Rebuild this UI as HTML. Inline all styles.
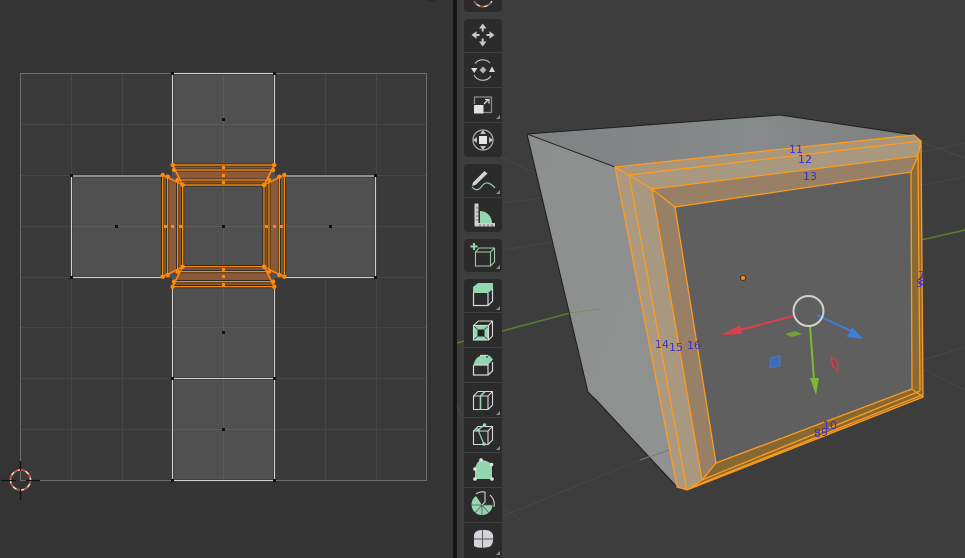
<!DOCTYPE html>
<html><head><meta charset="utf-8"><style>
html,body{margin:0;padding:0;background:#3d3d3d;width:965px;height:558px;overflow:hidden}
svg{display:block}
text{font-family:"DejaVu Sans","Liberation Sans",sans-serif;font-size:11px;fill:#3a30cc}
</style></head><body>
<svg width="965" height="558" viewBox="0 0 965 558" xmlns="http://www.w3.org/2000/svg">
<!-- backgrounds -->
<rect width="453" height="558" fill="#343434"/>
<rect x="457" width="508" height="558" fill="#3d3d3d"/>
<rect x="453" width="4" height="558" fill="#151515"/>
<circle cx="431" cy="-5" r="7" fill="#2a2a2a"/>

<!-- UV grid -->
<rect x="20.5" y="73.5" width="406" height="407" fill="#3a3a3a"/>
<g stroke="#464646" stroke-width="1" fill="none">
<path d="M71.5 73V480M122.5 73V480M172.5 73V480M223.5 73V480M274.5 73V480M325.5 73V480M376.5 73V480"/>
<path d="M20 124.5H426M20 175.5H426M20 226.5H426M20 277.5H426M20 327.5H426M20 378.5H426M20 429.5H426"/>
</g>
<rect x="20.5" y="73.5" width="406" height="407" fill="none" stroke="#6e6e6e"/>

<!-- UV faces -->
<g fill="#505050">
<rect x="172" y="74" width="103" height="102"/>
<rect x="71" y="176" width="101" height="102"/>
<rect x="172" y="176" width="103" height="102"/>
<rect x="275" y="176" width="101" height="102"/>
<rect x="172" y="278" width="103" height="101"/>
<rect x="172" y="379" width="103" height="101"/>
</g>
<g stroke="#5c5c5c" fill="none">
<path d="M223.5 74V480M172 124.5H275M71 226.5H376M172 327.5H275M172 429.5H275"/>
</g>
<g fill="none" stroke="#222" stroke-width="2.6">
<path d="M172.5 165V73.5H274.5V165M172.5 287V480.5H274.5V287M163 176H71.5V277.5H163M284 176H375.5V277.5H284M172.5 378.5H274.5"/>
</g>
<g fill="none" stroke="#d0d0d0" stroke-width="1.3">
<path d="M172.5 165V73.5H274.5V165M172.5 287V480.5H274.5V287M163 176H71.5V277.5H163M284 176H375.5V277.5H284M172.5 378.5H274.5"/>
</g>
<g fill="#111">
<rect x="171" y="72" width="3" height="3"/><rect x="273" y="72" width="3" height="3"/>
<rect x="70" y="174" width="3" height="3"/><rect x="374" y="174" width="3" height="3"/>
<rect x="70" y="276" width="3" height="3"/><rect x="374" y="276" width="3" height="3"/>
<rect x="171" y="377" width="3" height="3"/><rect x="273" y="377" width="3" height="3"/>
<rect x="171" y="479" width="3" height="3"/><rect x="273" y="479" width="3" height="3"/>
<rect x="222" y="118" width="3" height="3"/><rect x="115" y="225" width="3" height="3"/>
<rect x="222" y="225" width="3" height="3"/><rect x="329" y="225" width="3" height="3"/>
<rect x="222" y="331" width="3" height="3"/><rect x="222" y="428" width="3" height="3"/>
</g>

<!-- UV selected island -->
<g stroke="none">
<path d="M172.7 165H274.3L273 170H174Z" fill="#7a5c38"/>
<path d="M174 170H273L269 180H177.7Z" fill="#8c5a3a"/>
<path d="M177.7 180H269L264 185H182.7Z" fill="#7a5c38"/>
<path d="M172.7 286.7H274.3L273 281.7H174Z" fill="#7a5c38"/>
<path d="M174 281.7H273L269 271.7H177.7Z" fill="#8c5a3a"/>
<path d="M177.7 271.7H269L264 266.7H182.7Z" fill="#7a5c38"/>
<path d="M162.7 175L167.7 176.7V275L162.7 276.7Z" fill="#7a5c38"/>
<path d="M167.7 176.7L177.7 180V271.7L167.7 275Z" fill="#8c5a3a"/>
<path d="M177.7 180L182.7 185V266.7L177.7 271.7Z" fill="#7a5c38"/>
<path d="M284.3 175L279.3 176.7V275L284.3 276.7Z" fill="#7a5c38"/>
<path d="M279.3 176.7L269 180V271.7L279.3 275Z" fill="#8c5a3a"/>
<path d="M269 180L264 185V266.7L269 271.7Z" fill="#7a5c38"/>
</g>
<g fill="none" stroke="#1a1a1a" stroke-width="2.8">
<path d="M172.7 165H274.3M174 170H273M177.7 180H269M182.7 185H264M172.7 286.7H274.3M174 281.7H273M177.7 271.7H269M182.7 266.7H264"/>
<path d="M162.7 175V276.7M167.7 176.7V275M177.7 180V271.7M182.7 185V266.7M284.3 175V276.7M279.3 176.7V275M269 180V271.7M264 185V266.7"/>
</g>
<g fill="none" stroke="#ff8a0a" stroke-width="1.4">
<path d="M172.7 165H274.3M174 170H273M177.7 180H269M182.7 185H264M172.7 286.7H274.3M174 281.7H273M177.7 271.7H269M182.7 266.7H264"/>
<path d="M162.7 175V276.7M167.7 176.7V275M177.7 180V271.7M182.7 185V266.7M284.3 175V276.7M279.3 176.7V275M269 180V271.7M264 185V266.7"/>
<path d="M172.7 165L182.7 185M274.3 165L264 185M172.7 286.7L182.7 266.7M274.3 286.7L264 266.7M162.7 175L182.7 185M284.3 175L264 185M162.7 276.7L182.7 266.7M284.3 276.7L264 266.7"/>
</g>
<g fill="#ff8a0a">
<circle cx="172.7" cy="165" r="2.2"/><circle cx="274.3" cy="165" r="2.2"/><circle cx="174" cy="170" r="2.2"/><circle cx="273" cy="170" r="2.2"/>
<circle cx="177.7" cy="180" r="2.2"/><circle cx="269" cy="180" r="2.2"/><circle cx="182.7" cy="185" r="2.2"/><circle cx="264" cy="185" r="2.2"/>
<circle cx="172.7" cy="286.7" r="2.2"/><circle cx="274.3" cy="286.7" r="2.2"/><circle cx="174" cy="281.7" r="2.2"/><circle cx="273" cy="281.7" r="2.2"/>
<circle cx="177.7" cy="271.7" r="2.2"/><circle cx="269" cy="271.7" r="2.2"/><circle cx="182.7" cy="266.7" r="2.2"/><circle cx="264" cy="266.7" r="2.2"/>
<circle cx="162.7" cy="175" r="2.2"/><circle cx="167.7" cy="176.7" r="2.2"/><circle cx="162.7" cy="276.7" r="2.2"/><circle cx="167.7" cy="275" r="2.2"/>
<circle cx="284.3" cy="175" r="2.2"/><circle cx="279.3" cy="176.7" r="2.2"/><circle cx="284.3" cy="276.7" r="2.2"/><circle cx="279.3" cy="275" r="2.2"/>
<rect x="222" y="166" width="3" height="3"/><rect x="222" y="174" width="3" height="3"/><rect x="222" y="181" width="3" height="3"/>
<rect x="222" y="268" width="3" height="3"/><rect x="222" y="275" width="3" height="3"/><rect x="222" y="283" width="3" height="3"/>
<rect x="164" y="225" width="3" height="3"/><rect x="171" y="225" width="3" height="3"/><rect x="179" y="225" width="3" height="3"/>
<rect x="265" y="225" width="3" height="3"/><rect x="273" y="225" width="3" height="3"/><rect x="280" y="225" width="3" height="3"/>
</g>

<!-- 2D cursor -->
<circle cx="20.5" cy="480" r="10" fill="none" stroke="#e0e0e0" stroke-width="1.6"/>
<circle cx="20.5" cy="480" r="10" fill="none" stroke="#d8402c" stroke-width="1.6" stroke-dasharray="4 4"/>
<path d="M20.5 461V471M20.5 489V500M1 480.5H16M26 480.5H40" stroke="#111" stroke-width="1.2" fill="none"/>

<!-- 3D grid -->
<g stroke="#474747" stroke-width="1" fill="none">
<path d="M503 250L552 242M503 203L600 190M500 157L535 173M457 406L470 436M503 508L520 520M503 516L640 460M921 142L965 158M921 152L965 143M921 185L965 177M923 360L965 347M915 365L965 390"/>
</g>
<path d="M457 343L570 313" stroke="#5c7c30" stroke-width="1.6"/>
<path d="M921 240L965 230" stroke="#5c7c30" stroke-width="1.6"/>

<!-- Cube -->
<defs>
<linearGradient id="side" x1="0" y1="0" x2="1" y2="1"><stop offset="0" stop-color="#8d8f8f"/><stop offset="1" stop-color="#909292"/></linearGradient>
<linearGradient id="top" x1="0" y1="0" x2="1" y2="0"><stop offset="0" stop-color="#7e8282"/><stop offset="0.6" stop-color="#868a8a"/><stop offset="1" stop-color="#7e8080"/></linearGradient>
</defs>
<path d="M527 134L780 115L914 135L615 167Z" fill="url(#top)"/>
<path d="M527 134L615 167L677 487L597 400L588 392Z" fill="url(#side)"/>
<path d="M527 134L780 115L914 135M527 134L588 392L597 401L677 487" fill="none" stroke="#1d1d1d" stroke-width="1"/>
<path d="M527 134L615 167" fill="none" stroke="#2a2a2a" stroke-width="1"/>
<path d="M600 309L570 313" stroke="#6f8a55" stroke-width="1" opacity=".7"/>
<path d="M640 460L693 442" stroke="#7b7b7b" stroke-width="1"/>

<!-- Front face -->
<path d="M675 207L911 172L912 389L716 463Z" fill="#5f5f5f"/>
<path d="M615 167L914 135L921 141L629 175Z" fill="#a9977d"/>
<path d="M629 175L921 141L918 156L652 189Z" fill="#a89880"/>
<path d="M652 189L918 156L911 172L675 207Z" fill="#978066"/>
<path d="M615 167L629 175L687 490L677 487Z" fill="#ac9a80"/>
<path d="M629 175L652 189L702 480L687 490Z" fill="#a89880"/>
<path d="M652 189L675 207L716 463L702 480Z" fill="#978066"/>
<path d="M911 172L918 156L921 141L923 397L920 391L912 389Z" fill="#8b6a33"/>
<path d="M716 463L912 389L920 391L923 397L687 490L702 480Z" fill="#876830"/>
<g fill="none" stroke="#ff9a1f" stroke-width="1.3">
<path d="M615 167L914 135L921 141L923 397L687 490L677 487Z"/>
<path d="M629 175L921 141M652 189L918 156M675 207L911 172"/>
<path d="M629 175L687 490M652 189L702 480M675 207L716 463"/>
<path d="M911 172L912 389M918 156L920 391M921 141L918 156L911 172"/>
<path d="M716 463L912 389M702 480L920 391M692 487L922 395"/>
<path d="M615 167L629 175L652 189L675 207M716 463L702 480L687 490M912 389L923 397"/>
</g>

<!-- Origin -->
<circle cx="743" cy="278" r="2.6" fill="#f08a1e" stroke="#3a2a10" stroke-width=".8"/>

<!-- Gizmo -->
<path d="M793 316L740 330" stroke="#d8404e" stroke-width="2"/>
<path d="M721 335L740 325L742 334Z" fill="#d8404e"/>
<path d="M817 315L851 331" stroke="#3f7fd8" stroke-width="2"/>
<path d="M863 339L852 327L847 337Z" fill="#3f7fd8"/>
<path d="M810 326L814 380" stroke="#7cb832" stroke-width="2"/>
<path d="M816 395L810 378L819 378Z" fill="#7cb832"/>
<path d="M785 334L795 331L802 334L792 337Z" fill="#74a03a"/>
<path d="M770 358L780 355.500L780 366L770 368Z" fill="#3f6cb8" stroke="#4f80d0" stroke-width=".6"/>
<path d="M831 357L837 361L838 371L833 367Z" fill="#8a4a4a" stroke="#d8404e" stroke-width="1"/>
<circle cx="808.500" cy="311" r="15" fill="none" stroke="#d2d2d2" stroke-width="2"/>

<!-- Labels -->
<text x="789" y="153">11</text>
<text x="798" y="163">12</text>
<text x="803" y="180">13</text>
<text x="655" y="348">14</text>
<text x="669" y="351">15</text>
<text x="687" y="349">16</text>
<text x="823" y="429">10</text>
<text x="814" y="437">8</text>
<text x="821" y="436">9</text>
<text x="918" y="279">7</text>
<text x="918" y="285">8</text>
<text x="916" y="287">5</text>

<!-- Toolbar -->
<g fill="#2b2b2b">
<path d="M464 -4H502V8a4 4 0 0 1 -4 4H468a4 4 0 0 1 -4 -4Z"/>
<rect x="464" y="19" width="38" height="138" rx="4"/>
<rect x="464" y="164" width="38" height="68" rx="4"/>
<rect x="464" y="239" width="38" height="33" rx="4"/>
<rect x="464" y="279" width="38" height="285" rx="4"/>
</g>
<g stroke="#3f3f3f" stroke-width="1">
<path d="M464 52.500H502M464 87.500H502M464 122.500H502M464 197.500H502M464 312.500H502M464 347.500H502M464 382.500H502M464 417.500H502M464 452.500H502M464 487.500H502M464 522.500H502"/>
</g>
<!-- corner triangles -->
<g fill="#8a8a8a">
<path d="M500 115V119H496ZM500 190V194H496Z"/><path d="M500 265V269H496Z"/>
<path d="M500 306V310H496ZM500 411V415H496ZM500 446V450H496ZM500 551V555H496Z"/>
</g>
<!-- cursor top -->
<path d="M474 1A10 10 0 0 0 492 1" fill="none" stroke="#d8d8d8" stroke-width="1.4"/>
<path d="M474 1A10 10 0 0 0 492 1" fill="none" stroke="#a85a30" stroke-width="1.4" stroke-dasharray="4 4"/>
<!-- move -->
<g fill="#c9c9c9">
<path d="M482.700 23.500L479 28.500H486.500Z"/><path d="M482.700 46.500L479 41.500H486.500Z"/>
<path d="M471.500 35L476.500 31.300V38.700Z"/><path d="M494.500 35L489.500 31.300V38.700Z"/>
<rect x="481.700" y="28.500" width="2" height="3"/><rect x="481.700" y="38.500" width="2" height="3"/>
<rect x="476.500" y="34" width="3" height="2"/><rect x="486.500" y="34" width="3" height="2"/>
</g>
<!-- rotate -->
<path d="M475 63.500A10 10 0 0 1 490 63M491 76A10 10 0 0 1 474 75" fill="none" stroke="#c4c4c4" stroke-width="1.1"/>
<path d="M483 66.500L486.500 70L483 73.500L479.500 70Z" fill="#b4b4b4"/>
<path d="M471 68H477.500L474.200 73Z" fill="#dcdcdc"/><path d="M489 72H495L492 66.500Z" fill="#dcdcdc"/>
<!-- scale -->
<path d="M474.500 104V97H491.500V112.500H483.500" fill="none" stroke="#8a8a8a" stroke-width="1.3"/>
<rect x="474" y="105" width="9.500" height="8.500" fill="#e0e0e0"/>
<path d="M484 104L488.500 99.500M485 99.500H489V103.500" fill="none" stroke="#d8d8d8" stroke-width="1.3"/>
<!-- transform -->
<circle cx="483" cy="140" r="10" fill="none" stroke="#b0b0b0" stroke-width="1.2"/>
<rect x="479" y="136" width="8" height="8" fill="#e6e6e6"/>
<g fill="#c0c0c0"><path d="M483 130L486 134H480Z"/><path d="M483 150L486 146H480Z"/><path d="M473 140L477 137V143Z"/><path d="M493 140L489 137V143Z"/></g>
<!-- annotate -->
<path d="M472 186L473 182.500L484.500 171L487.500 173.500L475.500 185Z" fill="#d4d4d4"/>
<path d="M472 187Q477 193 482 186T495 188" fill="none" stroke="#8fcfa8" stroke-width="1.2"/>
<!-- measure -->
<path d="M480 223V211A12 12 0 0 1 492 223Z" fill="#93d7b0"/>
<path d="M474.500 203.500H478.500V223H495V226.500H474.500Z" fill="#cfcfcf"/>
<path d="M476 208H478.500M476 212H478.500M476 216H478.500M476 220H478.500M480 224V226.500M484 224V226.500M488 224V226.500M492 224V226.500" stroke="#555" stroke-width=".8"/>
<!-- add cube -->
<path d="M470.500 246.500H477.500M474 243V250" stroke="#93d7b0" stroke-width="2"/>
<path d="M475.500 252V266H490.500V252ZM475.500 252L479 248H494.500V262L490.500 266M490.500 252L494.500 248" fill="none" stroke="#a4c8ae" stroke-width="1.1"/>
<!-- extrude -->
<path d="M473 287L478 283H493V289L488 293H473Z" fill="#93d7b0"/>
<path d="M473.500 293V305.500H488V293M488 305.500L492.500 301V289" fill="none" stroke="#d8d8d8" stroke-width="1.2"/>
<!-- inset -->
<path d="M473.500 325.500H488.500V340H473.500Z" fill="#93d7b0"/>
<rect x="477.500" y="329.500" width="7" height="7" fill="#222"/>
<path d="M473.500 325.500L477.500 329.500M488.500 325.500L484.500 329.500M473.500 340L477.500 336.500M488.500 340L484.500 336.500" stroke="#333" stroke-width=".7"/>
<path d="M473.500 325.500L478.500 321H492.500V336L488.500 340M488.500 325.500L492.500 321" fill="none" stroke="#d8d8d8" stroke-width="1.1"/>
<rect x="473.500" y="325.500" width="15" height="14.500" fill="none" stroke="#d8d8d8" stroke-width="1.1"/>
<!-- bevel -->
<path d="M473.500 365Q475 358 480 356H486L489 365Z" fill="#93d7b0"/>
<path d="M489 355L493 359.500L489 364L486 359.500Z" fill="#93d7b0"/>
<path d="M473.500 365V375H488V365H473.500M488 375L492.500 371V362M480 355.500H488" fill="none" stroke="#d8d8d8" stroke-width="1.2"/>
<!-- loop cut -->
<path d="M473.500 396V409.500H488V396H473.500ZM473.500 396L478 391.500H492.500V405L488 409.500M488 396L492.500 391.500" fill="none" stroke="#d8d8d8" stroke-width="1.1"/>
<path d="M480.500 409.500V396L485 391.500" fill="none" stroke="#93d7b0" stroke-width="1.6"/>
<!-- knife -->
<path d="M473.500 431V444.500H488V431H473.500ZM473.500 431L478 426.500H492.500V440L488 444.500M488 431L492.500 426.500" fill="none" stroke="#d8d8d8" stroke-width="1.1"/>
<path d="M484.500 425L478 430L484 444" fill="none" stroke="#93d7b0" stroke-width="1.2"/>
<circle cx="484.500" cy="425" r="1.800" fill="#93d7b0"/><circle cx="478" cy="430" r="1.800" fill="#93d7b0"/><circle cx="484" cy="444" r="1.800" fill="#93d7b0"/>
<!-- poly build -->
<path d="M475 479L475 469Q477 460 482 460Q490 461 492 466V479Z" fill="#93d7b0"/>
<g fill="#e2e2e2"><circle cx="481" cy="460" r="1.800"/><circle cx="491.500" cy="464.500" r="1.800"/><circle cx="475" cy="469" r="1.800"/><circle cx="475" cy="479" r="1.800"/><circle cx="492" cy="479" r="1.800"/></g>
<!-- spin -->
<path d="M482 505L492.500 505A10.500 10.500 0 1 1 476 496L482 505Z" fill="#93d7b0"/>
<path d="M471.500 505H492.500M482 505V515.500M482 505L475 513M482 505L489 513" stroke="#555" stroke-width=".8"/>
<path d="M476 494A12 12 0 0 1 485 492V502L482 505M490 495A13 13 0 0 1 494 507" fill="none" stroke="#d0d0d0" stroke-width="1.1"/>
<!-- smooth -->
<path d="M474 535Q475 530 482 530Q491 529 493 535Q494 545 489 547Q478 549 474 546Z" fill="#d6d2dc"/>
<path d="M474 539H493M482.500 530V548" stroke="#5a5a5a" stroke-width="1"/>
</svg>
</body></html>
